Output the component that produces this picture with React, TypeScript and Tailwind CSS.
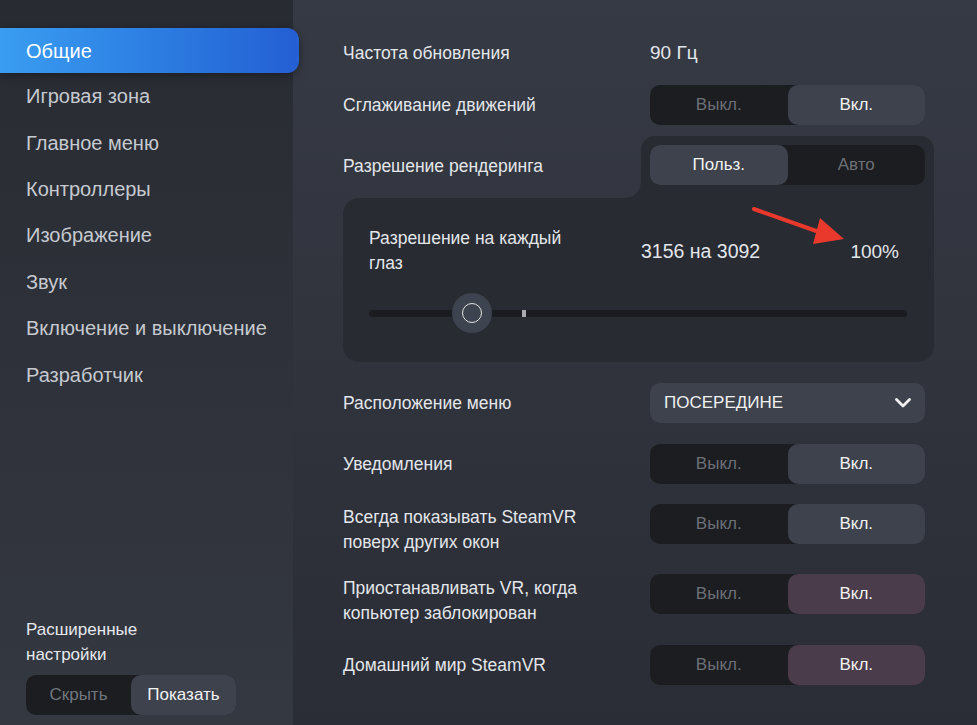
import React from 'react';

const menu = [
  'Общие',
  'Игровая зона',
  'Главное меню',
  'Контроллеры',
  'Изображение',
  'Звук',
  'Включение и выключение',
  'Разработчик',
];

function Toggle({
  left = 'Выкл.',
  right = 'Вкл.',
  active = 'right',
  tone = 'gray',
}: {
  left?: string;
  right?: string;
  active?: 'left' | 'right';
  tone?: 'gray' | 'purple';
}) {
  const on = tone === 'purple' ? 'bg-[#4a3c4a] text-[#f2f2f2]' : 'bg-[#3d424d] text-[#f2f2f2]';
  const off = 'text-[#6c7077]';
  return (
    <div className="flex h-10 w-[275px] shrink-0 rounded-[10px] bg-[#1c1d21] text-[17px]">
      <div className={`flex flex-1 items-center justify-center rounded-[10px] ${active === 'left' ? on : off}`}>
        {left}
      </div>
      <div className={`flex flex-1 items-center justify-center rounded-[10px] ${active === 'right' ? on : off}`}>
        {right}
      </div>
    </div>
  );
}

function Row({ children, control, className = '' }: { children: React.ReactNode; control: React.ReactNode; className?: string }) {
  return (
    <div className={`flex items-start pr-[9px] ${className}`}>
      <div className="flex min-h-10 flex-1 items-center leading-[25px]">
        <div>{children}</div>
      </div>
      {control}
    </div>
  );
}

export default function App() {
  return (
    <div
      className="flex h-[725px] w-[977px] overflow-hidden text-[#e3e6ea]"
      style={{ fontFamily: '"Liberation Sans", Arial, sans-serif' }}
    >
      {/* sidebar */}
      <aside className="relative z-10 flex w-[293px] shrink-0 flex-col bg-gradient-to-b from-[#282b32] to-[#343841] pt-[28px] pb-[10px]">
        <nav className="flex flex-col">
          {menu.map((m, i) => (
            <div
              key={m}
              className={
                i === 0
                  ? 'flex h-[45px] w-[299px] items-center rounded-r-[12px] bg-gradient-to-r from-[#3a9df1] to-[#245fd3] pl-[26px] text-[20px] text-white shadow-[0_2px_10px_rgba(0,0,0,0.35)]'
                  : 'flex h-[46.4px] items-center pl-[26px] text-[20px] text-[#c6cad0]'
              }
            >
              {m}
            </div>
          ))}
        </nav>
        <div className="mt-auto pl-[26px]">
          <div className="text-[17px] leading-[25px] text-[#e6e9ed]">
            Расширенные
            <br />
            настройки
          </div>
          <div className="mt-[8px] flex h-10 w-[210px] rounded-[10px] bg-[#1c1d21] text-[17px]">
            <div className="flex flex-1 items-center justify-center text-[#72767d]">Скрыть</div>
            <div className="flex flex-1 items-center justify-center rounded-[10px] bg-[#3d424d] text-[#f2f2f2]">
              Показать
            </div>
          </div>
        </div>
      </aside>

      {/* main */}
      <main className="flex flex-1 flex-col bg-gradient-to-b from-[#363a44] to-[#2a2d35] pt-[32px] pl-[50px] pr-[43px] text-[17.5px]">
        <div className="flex h-10 items-center pr-[9px]">
          <div className="flex-1 pt-[2px]">Частота обновления</div>
          <div className="w-[275px] pt-[2px] text-[19px]">90 Гц</div>
        </div>

        <Row className="mt-[13px]" control={<Toggle />}>
          Сглаживание движений
        </Row>

        {/* render resolution group */}
        <div className="mt-[11px] flex">
          <div className="relative flex flex-1 items-center pb-[2px]">
            <span>Разрешение рендеринга</span>
            <div className="absolute right-0 bottom-0 h-4 w-4 bg-[radial-gradient(circle_at_0_0,transparent_15.5px,#282b32_16px)]" />
          </div>
          <div className="rounded-t-[14px] bg-[#282b32] pt-[9px] pr-[9px] pb-[13px] pl-[9px]">
            <Toggle left="Польз." right="Авто" active="left" />
          </div>
        </div>
        <div className="relative h-[164px] rounded-b-[16px] rounded-tl-[16px] bg-[#282b32] pt-[28px] pr-[27px] pl-[26px]">
          <div className="flex items-center">
            <div className="w-[272px] shrink-0 pr-[60px] leading-[25px]">Разрешение на каждый глаз</div>
            <div className="flex-1 pt-[2px] text-[19.5px]">3156 на 3092</div>
            <div className="mr-[8px] pt-[2px] text-[19px]">100%</div>
          </div>
          <div className="relative mt-[17px] flex h-10 items-center">
            <div className="h-[7px] w-full rounded-full bg-[#1b1c20]" />
            <div className="absolute top-[16.5px] left-[153px] h-[7px] w-[4px] bg-[#a9abaf]" />
            <div className="absolute top-0 left-[83px] flex h-10 w-10 items-center justify-center rounded-full bg-[#3e4350]">
              <div className="h-[20px] w-[20px] rounded-full border-[1.5px] border-[#e4e4e4]" />
            </div>
          </div>
          <svg className="absolute top-[-2px] left-[397px]" width="120" height="60" viewBox="0 0 120 60">
            <line x1="14" y1="13" x2="82" y2="37" stroke="#e8392c" strokeWidth="4" strokeLinecap="round" />
            <polygon points="80,22 104,43 73,48" fill="#e8392c" />
          </svg>
        </div>

        <div className="mt-[21px] pr-[9px]">
          <div className="flex items-center">
            <div className="flex-1">Расположение меню</div>
            <div className="flex h-10 w-[275px] items-center justify-between rounded-[10px] bg-[#3d424d] pr-[14px] pl-[14px] text-[17px] text-[#f0f0f0]">
              <span>ПОСЕРЕДИНЕ</span>
              <svg width="16" height="10" viewBox="0 0 16 10">
                <polyline points="1.5,1.5 8,8 14.5,1.5" fill="none" stroke="#f0f0f0" strokeWidth="2.8" strokeLinecap="round" strokeLinejoin="round" />
              </svg>
            </div>
          </div>
        </div>

        <Row className="mt-[21px]" control={<Toggle />}>
          Уведомления
        </Row>
        <Row className="mt-[20px]" control={<Toggle />}>
          <div className="pt-px">
            Всегда показывать SteamVR
            <br />
            поверх других окон
          </div>
        </Row>
        <Row className="mt-[19px]" control={<Toggle tone="purple" />}>
          <div className="pt-[2px]">
            Приостанавливать VR, когда
            <br />
            копьютер заблокирован
          </div>
        </Row>
        <Row className="mt-[19px]" control={<Toggle tone="purple" />}>
          Домашний мир SteamVR
        </Row>
      </main>
    </div>
  );
}
